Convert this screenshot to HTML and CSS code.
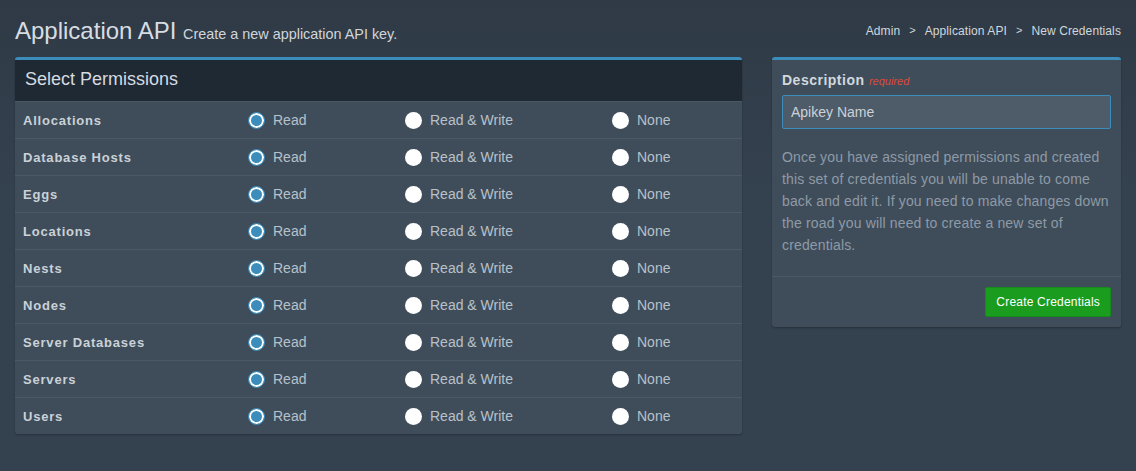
FILE: index.html
```html
<!DOCTYPE html>
<html>
<head>
<meta charset="utf-8">
<link rel="stylesheet" href="styles.css">
</head>
<body>
<div class="page">
  <div class="topbar">
    <h1 class="title">Application API <small>Create a new application API key.</small></h1>
    <ol class="crumbs">
      <li>Admin</li><li class="sep">&gt;</li><li>Application API</li><li class="sep">&gt;</li><li>New Credentials</li>
    </ol>
  </div>
  <div class="content">
    <div class="box perms">
      <div class="box-header">Select Permissions</div>
      <div class="rows">
        <div class="row"><span class="label">Allocations</span><span class="opt"><i class="radio on"></i>Read</span><span class="opt"><i class="radio"></i>Read &amp; Write</span><span class="opt"><i class="radio"></i>None</span></div>
        <div class="row"><span class="label">Database Hosts</span><span class="opt"><i class="radio on"></i>Read</span><span class="opt"><i class="radio"></i>Read &amp; Write</span><span class="opt"><i class="radio"></i>None</span></div>
        <div class="row"><span class="label">Eggs</span><span class="opt"><i class="radio on"></i>Read</span><span class="opt"><i class="radio"></i>Read &amp; Write</span><span class="opt"><i class="radio"></i>None</span></div>
        <div class="row"><span class="label">Locations</span><span class="opt"><i class="radio on"></i>Read</span><span class="opt"><i class="radio"></i>Read &amp; Write</span><span class="opt"><i class="radio"></i>None</span></div>
        <div class="row"><span class="label">Nests</span><span class="opt"><i class="radio on"></i>Read</span><span class="opt"><i class="radio"></i>Read &amp; Write</span><span class="opt"><i class="radio"></i>None</span></div>
        <div class="row"><span class="label">Nodes</span><span class="opt"><i class="radio on"></i>Read</span><span class="opt"><i class="radio"></i>Read &amp; Write</span><span class="opt"><i class="radio"></i>None</span></div>
        <div class="row"><span class="label">Server Databases</span><span class="opt"><i class="radio on"></i>Read</span><span class="opt"><i class="radio"></i>Read &amp; Write</span><span class="opt"><i class="radio"></i>None</span></div>
        <div class="row"><span class="label">Servers</span><span class="opt"><i class="radio on"></i>Read</span><span class="opt"><i class="radio"></i>Read &amp; Write</span><span class="opt"><i class="radio"></i>None</span></div>
        <div class="row"><span class="label">Users</span><span class="opt"><i class="radio on"></i>Read</span><span class="opt"><i class="radio"></i>Read &amp; Write</span><span class="opt"><i class="radio"></i>None</span></div>
      </div>
    </div>
    <div class="box side">
      <div class="side-body">
        <div class="desc-label">Description <span class="req">required</span></div>
        <div class="input">Apikey Name</div>
        <p class="help">Once you have assigned permissions and created this set of credentials you will be unable to come back and edit it. If you need to make changes down the road you will need to create a new set of credentials.</p>
      </div>
      <div class="side-footer">
        <button class="btn">Create Credentials</button>
      </div>
    </div>
  </div>
</div>
</body>
</html>
```

FILE: styles.css
```css
html, body {
  margin: 0;
  padding: 0;
}
body {
  width: 1136px;
  height: 471px;
  overflow: hidden;
  background: linear-gradient(180deg, #2f3a46 0%, #34414e 40%, #34414e 100%);
  font-family: "Liberation Sans", Arial, sans-serif;
  color: #cad1d8;
}
.page {
  padding: 0 15px;
}
.topbar {
  display: flex;
  justify-content: space-between;
  align-items: flex-end;
  height: 42px;
}
.title {
  margin: 0;
  font-weight: normal;
  font-size: 24px;
  line-height: 24px;
  color: #d7dde3;
  position: relative;
  top: 4px;
}
.title small {
  font-size: 14.4px;
  color: #cfd5db;
}
.crumbs {
  list-style: none;
  margin: 0;
  padding: 0 0 4px 0;
  display: flex;
  font-size: 12px;
  color: #d2d7dc;
  letter-spacing: 0.1px;
}
.crumbs .sep {
  padding: 0 9px;
  font-size: 11px;
}
.content {
  margin-top: 15px;
  display: flex;
  gap: 30px;
  align-items: flex-start;
}
.box {
  background: #3f4d5a;
  border-top: 3px solid #3c8dbc;
  border-radius: 3px;
  box-shadow: 0 1px 2px rgba(0,0,0,0.25);
}
.perms {
  width: 727px;
}
.box-header {
  background: #1f2933;
  height: 41px;
  line-height: 39px;
  padding: 0 10px;
  font-size: 18px;
  color: #d5dbe1;
  border-bottom: 1px solid #4b5866;
}
.row {
  display: grid;
  grid-template-columns: 225px 157px 207px 1fr;
  align-items: center;
  height: 36px;
  padding-left: 8px;
  border-top: 1px solid #4b5866;
}
.row:first-child {
  border-top: none;
}
.label {
  font-weight: bold;
  font-size: 13px;
  color: #cad1d8;
  letter-spacing: 0.8px;
}
.opt {
  display: flex;
  align-items: center;
  font-size: 14px;
  color: #b8c1ca;
}
.radio {
  display: inline-block;
  box-sizing: border-box;
  width: 17px;
  height: 17px;
  border-radius: 50%;
  background: #ffffff;
  margin-right: 8px;
}
.radio.on {
  background: #3c8dbc;
  border: 1px solid #3c8dbc;
  box-shadow: inset 0 0 0 2px #ffffff;
}
.side {
  width: 349px;
}
.side-body {
  padding: 12px 10px 20px 10px;
  border-bottom: 1px solid #4b5866;
}
.desc-label {
  font-weight: bold;
  font-size: 14px;
  color: #d2d8de;
  letter-spacing: 0.5px;
}
.req {
  font-weight: normal;
  font-style: italic;
  font-size: 11px;
  color: #dd4b39;
  letter-spacing: 0;
}
.input {
  margin-top: 7px;
  box-sizing: border-box;
  height: 34px;
  border: 1px solid #3c8dbc;
  border-radius: 2px;
  background: #4e5b68;
  padding: 0 8px;
  line-height: 32px;
  font-size: 14px;
  color: #cbd2d9;
}
.help {
  margin: 17px 0 0 0;
  font-size: 14px;
  line-height: 22px;
  letter-spacing: 0.15px;
  color: #8e9aa6;
}
.side-footer {
  display: flex;
  justify-content: flex-end;
  padding: 10px;
}
.btn {
  background: #1a9c1f;
  border: 1px solid #168a1b;
  border-radius: 2px;
  color: #ffffff;
  font-family: "Liberation Sans", Arial, sans-serif;
  font-size: 12px;
  letter-spacing: 0.2px;
  height: 30px;
  padding: 0 10px;
}
```
